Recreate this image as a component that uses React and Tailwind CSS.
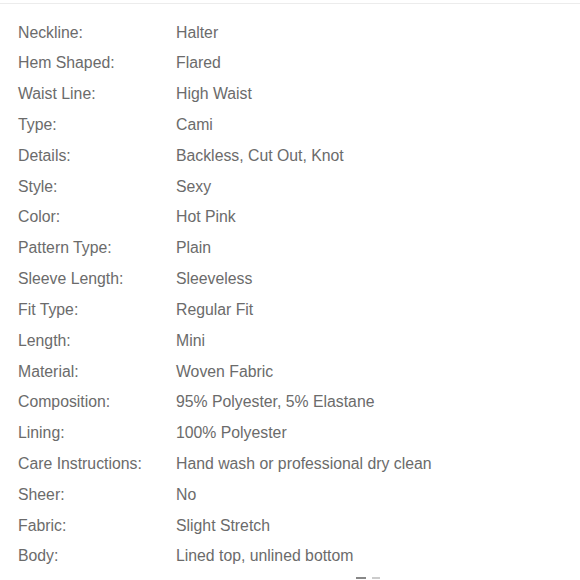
import React from 'react';

const rows = [
  ['Neckline:', 'Halter'],
  ['Hem Shaped:', 'Flared'],
  ['Waist Line:', 'High Waist'],
  ['Type:', 'Cami'],
  ['Details:', 'Backless, Cut Out, Knot'],
  ['Style:', 'Sexy'],
  ['Color:', 'Hot Pink'],
  ['Pattern Type:', 'Plain'],
  ['Sleeve Length:', 'Sleeveless'],
  ['Fit Type:', 'Regular Fit'],
  ['Length:', 'Mini'],
  ['Material:', 'Woven Fabric'],
  ['Composition:', '95% Polyester, 5% Elastane'],
  ['Lining:', '100% Polyester'],
  ['Care Instructions:', 'Hand wash or professional dry clean'],
  ['Sheer:', 'No'],
  ['Fabric:', 'Slight Stretch'],
  ['Body:', 'Lined top, unlined bottom'],
];

const App = () => {
  return (
    <div
      className="w-[580px] h-[580px] overflow-hidden bg-white"
      style={{ fontFamily: '"Liberation Sans", Arial, sans-serif' }}
    >
      <div className="pt-[3px]">
        <div className="h-px bg-[#ececec]" />
      </div>
      {/* product attributes */}
      <div className="pt-[13px] pl-[18px]">
        {rows.map(([label, value]) => (
          <div key={label} className="flex h-[30.82px] items-center text-[15.8px] text-[#6b6b6b]">
            <span className="w-[158px] shrink-0">{label}</span>
            <span>{value}</span>
          </div>
        ))}
      </div>
      <div className="flex justify-center pl-[155px] pt-[5px] gap-[6px]">
        <span className="block w-[10px] h-[2px] bg-[#888]" />
        <span className="block w-[8px] h-[2px] bg-[#ccc]" />
      </div>
    </div>
  );
};

export default App;
